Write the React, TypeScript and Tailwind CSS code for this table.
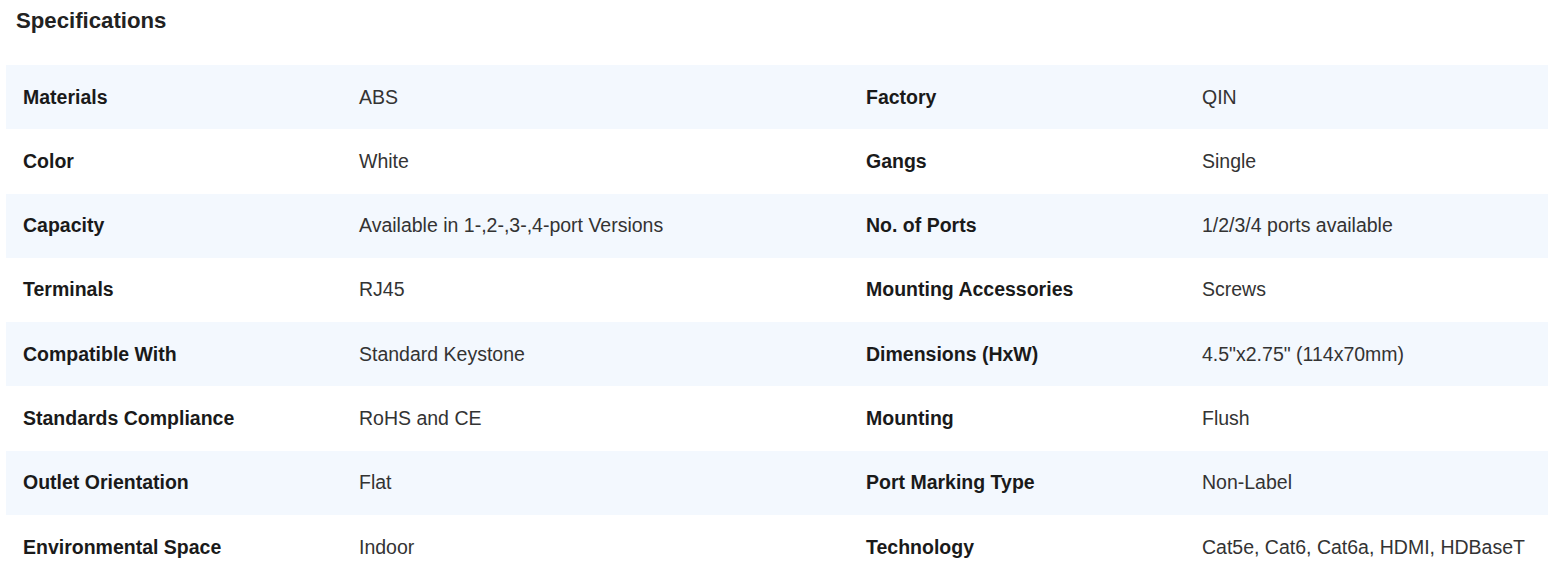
import React from "react";

const rows: [string, string, string, string][] = [
  ["Materials", "ABS", "Factory", "QIN"],
  ["Color", "White", "Gangs", "Single"],
  ["Capacity", "Available in 1-,2-,3-,4-port Versions", "No. of Ports", "1/2/3/4 ports available"],
  ["Terminals", "RJ45", "Mounting Accessories", "Screws"],
  ["Compatible With", "Standard Keystone", "Dimensions (HxW)", "4.5\"x2.75\" (114x70mm)"],
  ["Standards Compliance", "RoHS and CE", "Mounting", "Flush"],
  ["Outlet Orientation", "Flat", "Port Marking Type", "Non-Label"],
  ["Environmental Space", "Indoor", "Technology", "Cat5e, Cat6, Cat6a, HDMI, HDBaseT"],
];

export default function App() {
  return (
    <div
      className="bg-white w-[1548px] h-[574px] overflow-hidden"
      style={{ fontFamily: '"Liberation Sans", Arial, sans-serif' }}
    >
      <h2 className="pl-[16px] pt-[9.5px] text-[22.2px] leading-[22px] font-bold text-[#222222]">
        Specifications
      </h2>
      <div className="ml-[6px] mt-[33.5px]">
        {rows.map((r, i) => (
          <div
            key={i}
            className={`grid grid-cols-[336px_507px_336px_1fr] h-[64.3px] items-center text-[19.5px] ${
              i % 2 === 0 ? "bg-[#f3f8fe]" : "bg-white"
            }`}
          >
            <div className="pl-[17px] font-bold text-[#1a1a1a]">{r[0]}</div>
            <div className="pl-[17px] text-[#333333]">{r[1]}</div>
            <div className="pl-[17px] font-bold text-[#1a1a1a]">{r[2]}</div>
            <div className="pl-[17px] text-[#333333]">{r[3]}</div>
          </div>
        ))}
      </div>
    </div>
  );
}
